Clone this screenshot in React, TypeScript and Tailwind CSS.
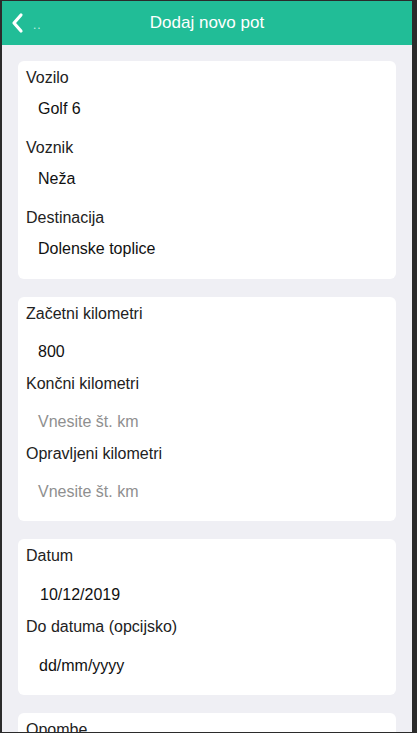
import React from 'react';

type Field = { label: string; value?: string; placeholder?: string };

function Label({ children }: { children: React.ReactNode }) {
  return <div className="h-[20px] leading-[20px] text-[16px] text-[#222]">{children}</div>;
}

export default function App() {
  const first: Field[] = [
    { label: 'Vozilo', value: 'Golf 6' },
    { label: 'Voznik', value: 'Neža' },
    { label: 'Destinacija', value: 'Dolenske toplice' },
  ];
  const km: Field[] = [
    { label: 'Začetni kilometri', value: '800' },
    { label: 'Končni kilometri', placeholder: 'Vnesite št. km' },
    { label: 'Opravljeni kilometri', placeholder: 'Vnesite št. km' },
  ];

  return (
    <div
      className="h-[733px] overflow-hidden bg-[#2b2b2b] pt-px pl-[2px] pr-[5px] pb-px"
      style={{ fontFamily: '"Liberation Sans", Arial, sans-serif' }}
    >
      <div className="h-full bg-[#efeff4] flex flex-col overflow-hidden">
        {/* header */}
        <div className="relative h-[44px] shrink-0 bg-[#21bd97] flex items-center justify-center">
          <div className="absolute left-[8px] top-0 h-full flex items-center gap-[7px]">
            <svg width="16" height="22" viewBox="0 0 16 22" fill="none">
              <path d="M11 3 L4 11 L11 19" stroke="#fff" strokeWidth="3.2" strokeLinecap="round" strokeLinejoin="round" />
            </svg>
            <span className="text-[12px] leading-none text-white/75 mt-[4px] tracking-[1px]">..</span>
          </div>
          <span className="text-[17px] text-white">Dodaj novo pot</span>
        </div>

        <div className="flex flex-col gap-[18px] px-4 pt-[16px]">
          {/* vehicle */}
          <div className="bg-white rounded-[6px] pt-[7px] pb-[9px] pl-[8px] flex flex-col gap-[8px]">
            {first.map((f) => (
              <div key={f.label}>
                <Label>{f.label}</Label>
                <div className="h-[42px] flex items-center pl-[12px] text-[16px] text-[#111]">{f.value}</div>
              </div>
            ))}
          </div>

          {/* kilometers */}
          <div className="bg-white rounded-[6px] pt-[7px] pb-[7px] pl-[8px] flex flex-col">
            {km.map((f) => (
              <div key={f.label}>
                <Label>{f.label}</Label>
                <div className="h-[50px] pt-[18px] pl-[12px] text-[16px] leading-[20px]">
                  {f.value ? (
                    <span className="text-[#111]">{f.value}</span>
                  ) : (
                    <span className="text-[#8f8f8f]">{f.placeholder}</span>
                  )}
                </div>
              </div>
            ))}
          </div>

          {/* dates */}
          <div className="bg-white rounded-[6px] pt-[7px] pb-[7px] pl-[8px] flex flex-col">
            <Label>Datum</Label>
            <div className="h-[51px] pt-[19px] pl-[14px] text-[16px] leading-[20px] text-[#111]">10/12/2019</div>
            <Label>Do datuma (opcijsko)</Label>
            <div className="h-[51px] pt-[19px] pl-[13px] text-[16px] leading-[20px] text-[#111]">dd/mm/yyyy</div>
          </div>

          {/* notes */}
          <div className="bg-white rounded-[6px] pt-[7px] pl-[8px] h-[80px]">
            <Label>Opombe</Label>
          </div>
        </div>
      </div>
    </div>
  );
}
